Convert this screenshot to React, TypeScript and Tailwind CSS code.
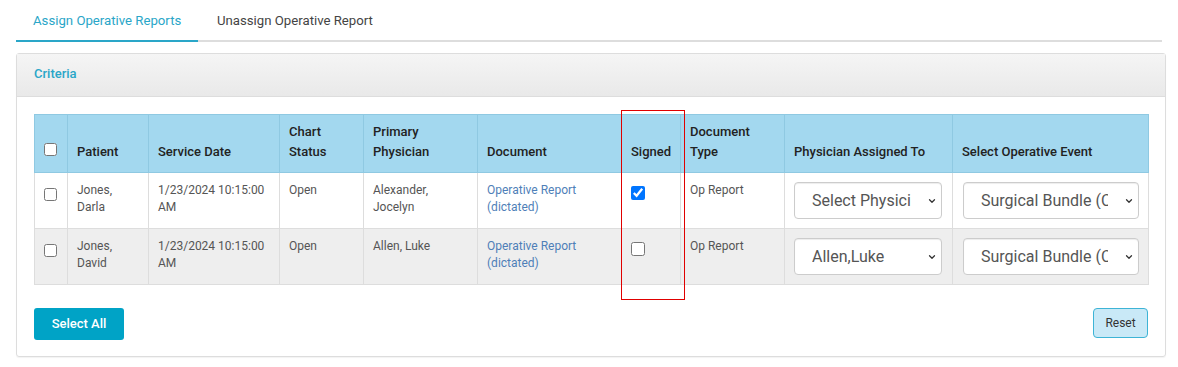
import { ChevronDown } from 'lucide-react';

const rows = [
  {
    patient: ['Jones,', 'Darla'],
    date: ['1/23/2024 10:15:00', 'AM'],
    status: 'Open',
    physician: ['Alexander,', 'Jocelyn'],
    signed: true,
    assigned: 'Select Physician',
    event: 'Surgical Bundle (Cholecystectomy)',
  },
  {
    patient: ['Jones,', 'David'],
    date: ['1/23/2024 10:15:00', 'AM'],
    status: 'Open',
    physician: ['Allen, Luke'],
    signed: false,
    assigned: 'Allen,Luke',
    event: 'Surgical Bundle (Cholecystectomy)',
  },
];

function Select({ value, width }: { value: string; width: string }) {
  return (
    <div className={`relative ${width} h-[37px]`}>
      <select
        defaultValue={value}
        className="w-full h-full appearance-none bg-white border border-[#cccccc] rounded-[4px] pl-[17px] pr-[30px] text-[16px] text-[#555] font-['Roboto'] shadow-[inset_0_1px_1px_rgba(0,0,0,0.075)] outline-none"
      >
        <option>{value}</option>
      </select>
      <ChevronDown
        className="absolute right-[5px] top-[14px] h-[10px] w-[10px] text-[#333] pointer-events-none"
        strokeWidth={3}
      />
    </div>
  );
}

function Box({ checked = false }: { checked?: boolean }) {
  return (
    <input
      type="checkbox"
      defaultChecked={checked}
      className="h-[13px] w-[13px] m-0 align-middle accent-[#0075ff]"
    />
  );
}

export default function App() {
  const th = 'border border-[#8fc9e2] px-[9px] pb-[10px] pt-0 align-bottom text-left font-medium text-[13px] leading-[20px] text-[#222]';
  const td = 'border border-[#dddddd] px-[9px] pt-[9px] align-top text-[12px] leading-[17px]';

  return (
    <div className="relative w-[1178px] h-[367px] bg-white font-['Roboto',sans-serif] px-[16px] pt-0">
      {/* Tabs */}
      <div className="flex border-b-2 border-[#dddddd] h-[42px]">
        <div className="w-[182px] pl-[17px] pt-[11px] text-[13.2px] text-[#2aa6c8] border-b-2 border-[#2aa6c8] -mb-[2px]">
          Assign Operative Reports
        </div>
        <div className="pl-[19px] pt-[11px] text-[13.2px] text-[#444]">Unassign Operative Report</div>
      </div>

      {/* Panel */}
      <div className="mt-[11px] w-[1150px] border border-[#dddddd] rounded-[3px] shadow-[0_1px_1px_rgba(0,0,0,0.05)]">
        <div className="h-[43px] bg-gradient-to-b from-[#f5f5f5] to-[#e9e9e9] border-b border-[#dddddd] pl-[17px] pb-[2px] flex items-center text-[13px] font-medium text-[#2aa6c8]">
          Criteria
        </div>
        <div className="px-[17px] pt-[17px] pb-[16px]">
          <table className="table-fixed border-collapse w-[1114px]">
            <colgroup>
              <col className="w-[33px]" />
              <col className="w-[81px]" />
              <col className="w-[131px]" />
              <col className="w-[84px]" />
              <col className="w-[114px]" />
              <col className="w-[144px]" />
              <col className="w-[59px]" />
              <col className="w-[104px]" />
              <col className="w-[168px]" />
              <col className="w-[196px]" />
            </colgroup>
            <thead>
              <tr className="h-[58px] bg-[#a3d8ef]">
                <th className={`${th} pb-[13px]`}>
                  <Box />
                </th>
                <th className={th}>Patient</th>
                <th className={th}>Service Date</th>
                <th className={th}>
                  Chart
                  <br />
                  Status
                </th>
                <th className={th}>
                  Primary
                  <br />
                  Physician
                </th>
                <th className={th}>Document</th>
                <th className={th}>Signed</th>
                <th className={th}>
                  Document
                  <br />
                  Type
                </th>
                <th className={`${th} text-[12.5px]`}>Physician Assigned To</th>
                <th className={`${th} text-[12.5px]`}>Select Operative Event</th>
              </tr>
            </thead>
            <tbody>
              {rows.map((r, i) => (
                <tr key={i} className={`h-[56px] ${i === 1 ? 'bg-[#eeeeee]' : 'bg-white'}`}>
                  <td className={`${td} pt-[13px]`}>
                    <Box />
                  </td>
                  <td className={`${td} text-[#555]`}>
                    {r.patient[0]}
                    <br />
                    {r.patient[1]}
                  </td>
                  <td className={`${td} text-[#555]`}>
                    {r.date[0]}
                    <br />
                    {r.date[1]}
                  </td>
                  <td className={`${td} text-[#555]`}>{r.status}</td>
                  <td className={`${td} text-[#555]`}>
                    {r.physician.map((p, j) => (
                      <div key={j}>{p}</div>
                    ))}
                  </td>
                  <td className={`${td} text-[#4f7fb8]`}>
                    Operative Report
                    <br />
                    (dictated)
                  </td>
                  <td className={`${td} pt-[13px]`}>
                    <input
                      type="checkbox"
                      defaultChecked={r.signed}
                      className="h-[14px] w-[14px] m-0 accent-[#0075ff]"
                    />
                  </td>
                  <td className={`${td} text-[#555]`}>Op Report</td>
                  <td className={`${td} pt-[9px] pl-[9px]`}>
                    <Select value={r.assigned} width="w-[148px]" />
                  </td>
                  <td className={`${td} pt-[9px] pl-[10px]`}>
                    <Select value={r.event} width="w-[176px]" />
                  </td>
                </tr>
              ))}
            </tbody>
          </table>

          <div className="flex justify-between items-start mt-[23px]">
            <button className="w-[90px] h-[32px] bg-[#00a3c6] text-white text-[13px] font-medium rounded-[3px]">
              Select All
            </button>
            <button className="w-[55px] h-[30px] bg-[#c9e9f7] border border-[#3db4d6] text-[#333] text-[12px] rounded-[4px]">
              Reset
            </button>
          </div>
        </div>
      </div>

      {/* highlight box */}
      <div className="absolute left-[621px] top-[110px] w-[64px] h-[190px] border border-[#e00000] pointer-events-none" />
    </div>
  );
}
